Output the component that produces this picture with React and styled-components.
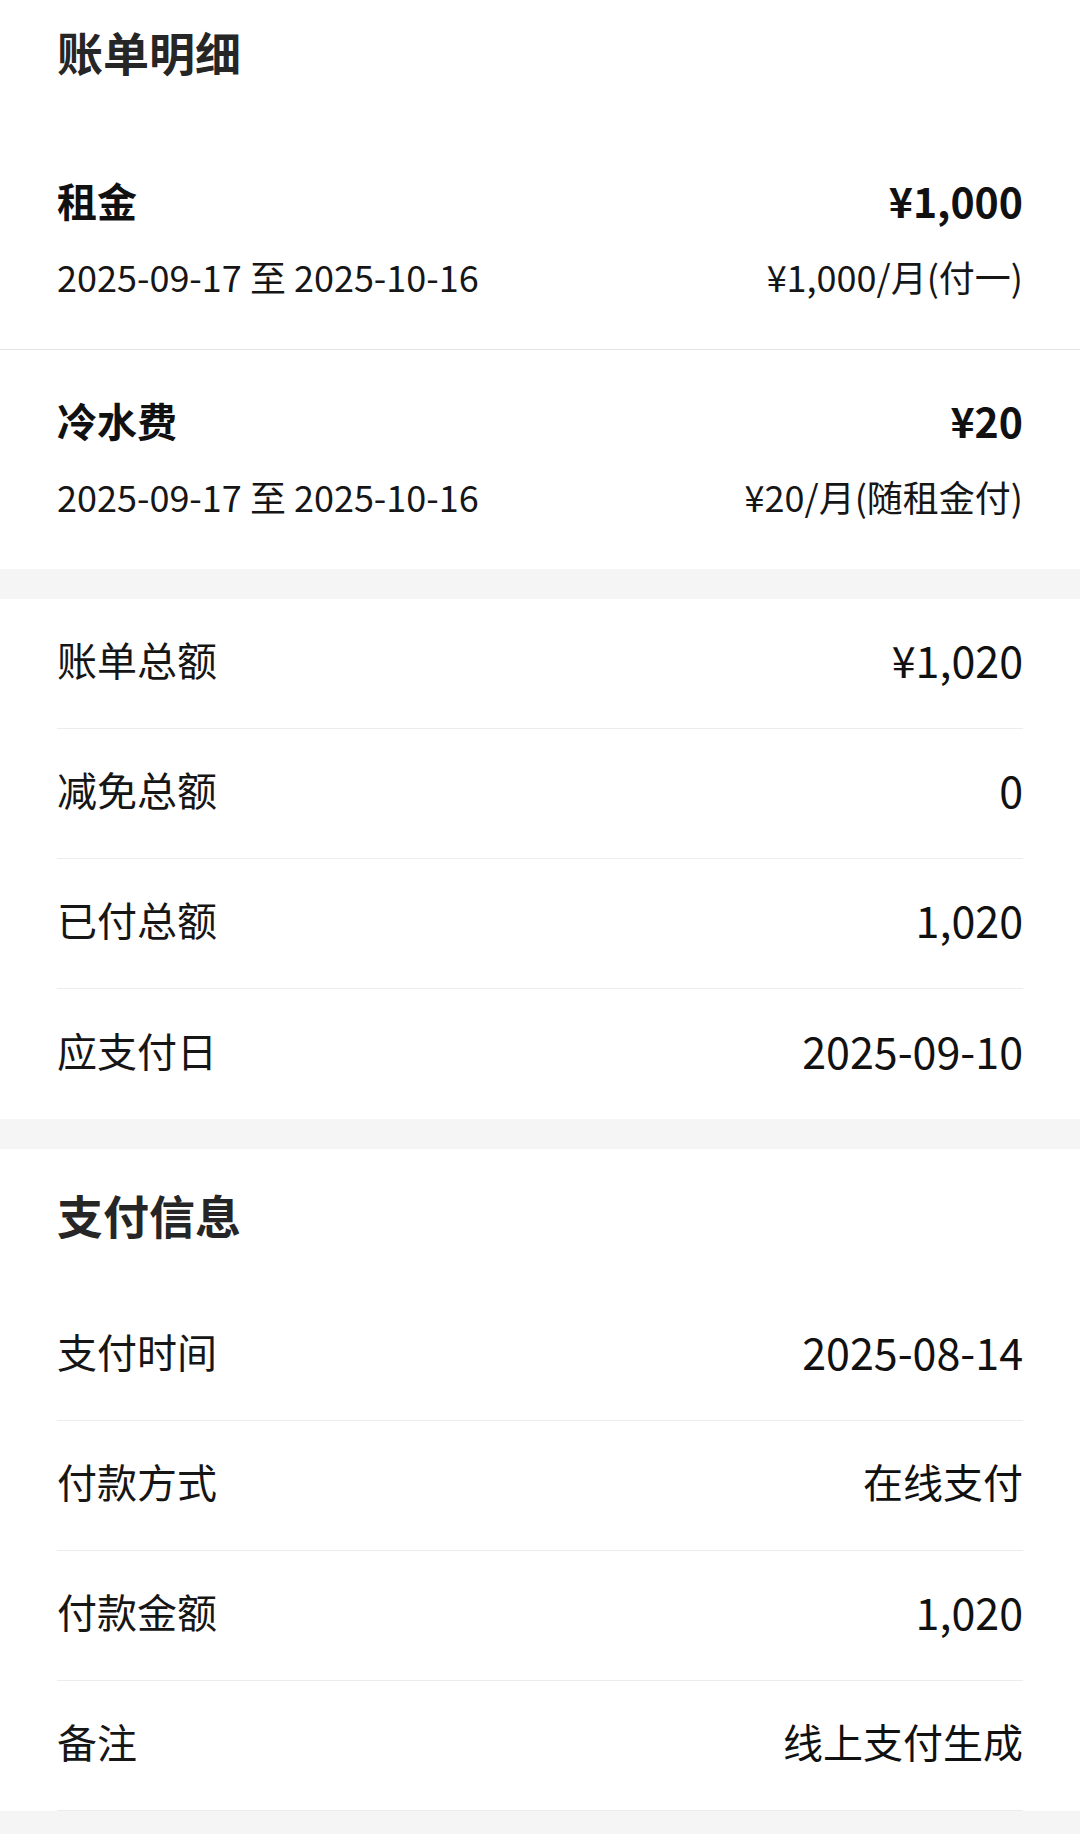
import styled, { createGlobalStyle } from "styled-components";

const GlobalStyle = createGlobalStyle`
  html, body {
    margin: 0;
    padding: 0;
    background: #f5f5f5;
    font-family: "Noto Sans CJK SC", "Noto Sans", sans-serif;
    color: #111;
  }
`;

const charges = [
  {
    name: "租金",
    amount: "¥1,000",
    period: "2025-09-17 至 2025-10-16",
    rule: "¥1,000/月(付一)",
  },
  {
    name: "冷水费",
    amount: "¥20",
    period: "2025-09-17 至 2025-10-16",
    rule: "¥20/月(随租金付)",
  },
];

const totals = [
  { label: "账单总额", value: "¥1,020" },
  { label: "减免总额", value: "0" },
  { label: "已付总额", value: "1,020" },
  { label: "应支付日", value: "2025-09-10" },
];

const payment = [
  { label: "支付时间", value: "2025-08-14" },
  { label: "付款方式", value: "在线支付" },
  { label: "付款金额", value: "1,020" },
  { label: "备注", value: "线上支付生成" },
];

// 纯数字的值字号略大
const isNumeric = (text) => !/[\u4e00-\u9fff]/.test(text);

const App = () => {
  return (
    <Page>
      <GlobalStyle />
      <Section>
        <Header $top={19} $bottom={47}>
          <Title>账单明细</Title>
        </Header>
        {charges.map((item) => (
          <Charge key={item.name}>
            <Line>
              <ChargeName>{item.name}</ChargeName>
              <ChargeAmount>{item.amount}</ChargeAmount>
            </Line>
            <SubLine>
              <span>{item.period}</span>
              <span>{item.rule}</span>
            </SubLine>
          </Charge>
        ))}
      </Section>

      <Section>
        <List>
          {totals.map((row) => (
            <Row key={row.label}>
              <Label>{row.label}</Label>
              <Value $num={isNumeric(row.value)}>{row.value}</Value>
            </Row>
          ))}
        </List>
      </Section>

      <Section>
        <Header $top={33} $bottom={45}>
          <Title>支付信息</Title>
        </Header>
        <List $closed>
          {payment.map((row) => (
            <Row key={row.label}>
              <Label>{row.label}</Label>
              <Value $num={isNumeric(row.value)}>{row.value}</Value>
            </Row>
          ))}
        </List>
      </Section>
    </Page>
  );
};

export default App;

const Page = styled.div`
  display: flex;
  flex-direction: column;
  gap: 30px;
  min-height: 1834px;
  background: #f5f5f5;
`;

const Section = styled.section`
  background: #fff;
`;

const Header = styled.div`
  padding: ${(p) => p.$top}px 57px ${(p) => p.$bottom}px;
`;

const Title = styled.h2`
  margin: 0;
  font-size: 46px;
  line-height: 64px;
  font-weight: 700;
  color: #262626;
`;

const Charge = styled.div`
  padding: 42px 57px 48px;

  & + & {
    border-top: 1px solid #e3e3e8;
  }
`;

const Line = styled.div`
  display: flex;
  justify-content: space-between;
  align-items: center;
  height: 56px;
`;

const ChargeName = styled.span`
  font-size: 40px;
  font-weight: 700;
  color: #111;
`;

const ChargeAmount = styled.span`
  font-size: 41px;
  font-weight: 700;
  color: #111;
`;

const SubLine = styled.div`
  display: flex;
  justify-content: space-between;
  align-items: center;
  height: 50px;
  margin-top: 23px;
  font-size: 36px;
  color: #161616;
`;

const List = styled.div`
  margin: 0 57px;
  display: flex;
  flex-direction: column;

  & > *:last-child {
    border-bottom: ${(p) => (p.$closed ? "1px solid #ececec" : "none")};
  }
`;

const Row = styled.div`
  display: flex;
  justify-content: space-between;
  align-items: center;
  box-sizing: border-box;
  height: 130px;
  padding-bottom: 9px;
  border-bottom: 1px solid #ececec;
`;

const Label = styled.span`
  font-size: 40px;
  color: #161616;
`;

const Value = styled.span`
  font-size: ${(p) => (p.$num ? "43px" : "40px")};
  color: #111;
`;
